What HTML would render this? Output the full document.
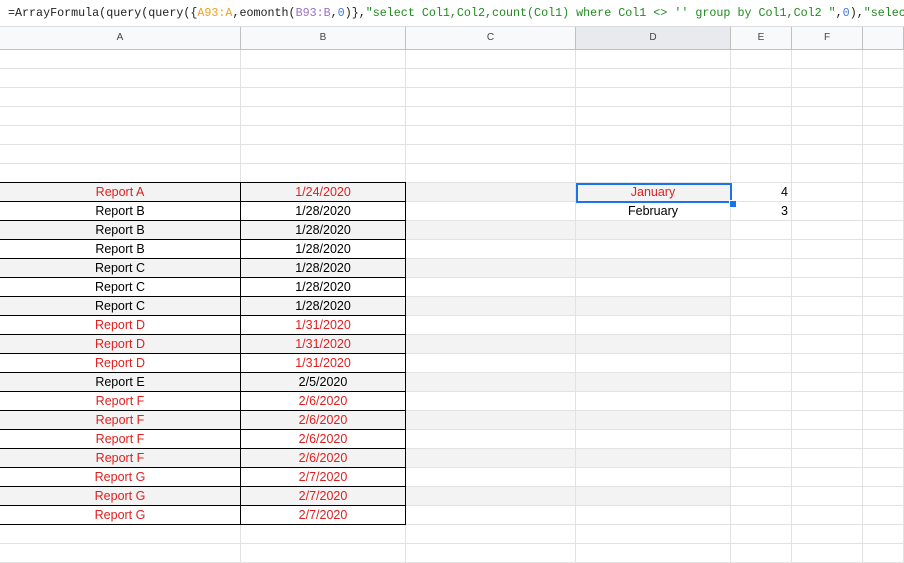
<!DOCTYPE html>
<html><head><style>
body{margin:0;width:904px;height:561px;overflow:hidden;background:#fff;font-family:"Liberation Sans",sans-serif;position:relative}
.fb{position:absolute;left:0;top:0;width:904px;height:27px;box-sizing:border-box;overflow:hidden;border-bottom:1px solid #dadce0;font-family:"Liberation Mono",monospace;font-size:11.7px;line-height:27px;white-space:nowrap;padding-left:8px;color:#222}
.hd{position:absolute;top:27px;height:22px;background:#f8f9fa;border-bottom:1px solid #c0c0c0;border-right:1px solid #c0c0c0;box-sizing:content-box;font-size:10px;color:#444;text-align:center;line-height:22px}
.c{position:absolute;height:19px;box-sizing:border-box;border-right:1px solid #e2e2e2;border-bottom:1px solid #e2e2e2;font-size:12.5px;line-height:19px;text-align:center;color:#000;overflow:hidden}
.g{background:#f3f3f3}
.r{color:#e02020}
.bk{border-right:1px solid #000;border-bottom:1px solid #000}
</style></head><body>
<div class="fb">=ArrayFormula(query(query({<span style="color:#f0a020">A93:A</span>,eomonth(<span style="color:#9a70c0">B93:B</span>,<span style="color:#3b78e7">0</span>)},<span style="color:#1f8a1f">"select Col1,Col2,count(Col1) where Col1 &lt;&gt; '' group by Col1,Col2 "</span>,<span style="color:#3b78e7">0</span>),<span style="color:#1f8a1f">"selec</span></div>
<div id="g"></div>
<script>
var cols=[[0,241],[241,406],[406,576],[576,731],[731,792],[792,863],[863,904]];
var L=['A','B','C','D','E','F',''];
var h='';
cols.forEach(function(c,i){h+='<div class="hd" style="left:'+c[0]+'px;width:'+(c[1]-c[0]-1)+'px;'+(i==3?'background:#e8eaed;':'')+'">'+L[i]+'</div>';});
var A=['Report A','Report B','Report B','Report B','Report C','Report C','Report C','Report D','Report D','Report D','Report E','Report F','Report F','Report F','Report F','Report G','Report G','Report G'];
var B=['1/24/2020','1/28/2020','1/28/2020','1/28/2020','1/28/2020','1/28/2020','1/28/2020','1/31/2020','1/31/2020','1/31/2020','2/5/2020','2/6/2020','2/6/2020','2/6/2020','2/6/2020','2/7/2020','2/7/2020','2/7/2020'];
var red=[1,0,0,0,0,0,0,1,1,1,0,1,1,1,1,1,1,1];
for(var r=0;r<27;r++){
 var y=50+r*19,d=r-7;
 cols.forEach(function(c,i){
  var cls='c',t='',st='';
  if(d>=0&&d<18){
   if(i<4&&d%2==0)cls+=' g';
   if(i<2){cls+=' bk';if(d==0)st+='border-top:1px solid #000;';if(i==0)t=A[d];else t=B[d];if(red[d])cls+=' r';}
  }
  if(d==0&&i==3){t='January';cls+=' r';}
  if(d==1&&i==3){t='February';}
  if(d==0&&i==4){t='4';st+='text-align:right;padding-right:3px;';}
  if(d==1&&i==4){t='3';st+='text-align:right;padding-right:3px;';}
  var top=y,hh=19;
  if(d==0&&i<2){top=y-1;hh=20;}
  h+='<div class="'+cls+'" style="left:'+c[0]+'px;top:'+top+'px;width:'+(c[1]-c[0])+'px;height:'+hh+'px;'+st+'">'+t+'</div>';
 });
}
h+='<div style="position:absolute;left:576px;top:183px;width:156px;height:20px;box-sizing:border-box;border:2px solid #1a73e8"></div>';
h+='<div style="position:absolute;left:729px;top:200px;width:6px;height:6px;background:#1a73e8;border:1px solid #fff"></div>';
document.getElementById('g').innerHTML=h;
</script>
</body></html>
